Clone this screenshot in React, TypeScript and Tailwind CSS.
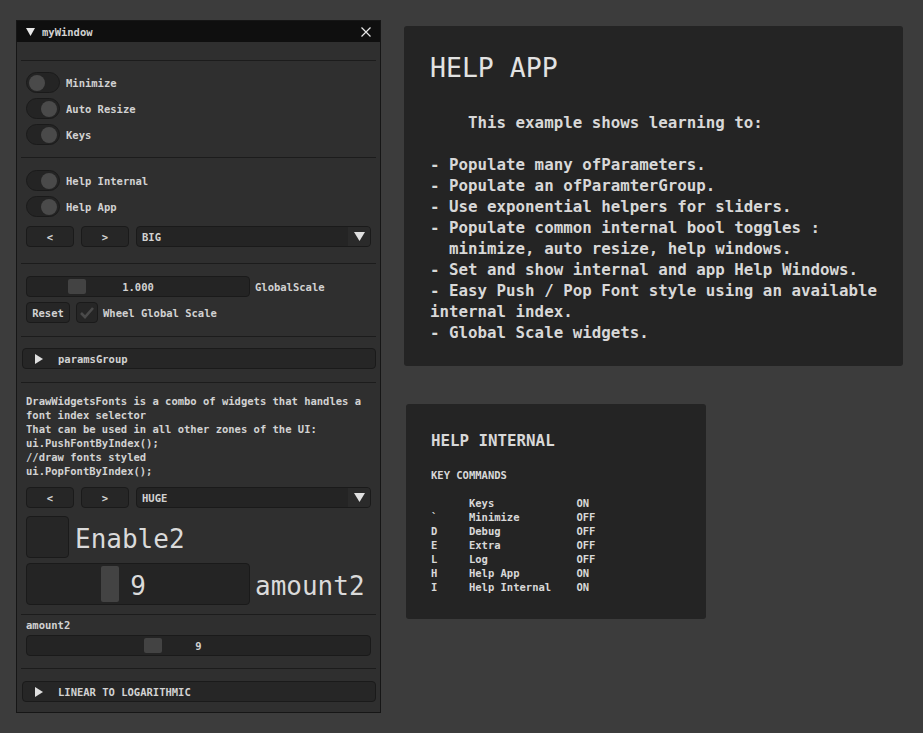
import React from 'react';

const mono = { fontFamily: '"DejaVu Sans Mono", "Liberation Mono", monospace' };

function Separator({ mt }: { mt: string }) {
  return <div className={`${mt} -mx-[5px] h-px bg-[#1c1c1c]`} />;
}

function Toggle({ on, label, mt }: { on: boolean; label: string; mt: string }) {
  return (
    <div className={`${mt} flex h-[21px] items-center`}>
      <div
        className={`flex h-[21px] w-[34px] items-center rounded-full border border-[#1a1a1a] bg-[#242424] px-[2px] ${
          on ? 'justify-end' : 'justify-start'
        }`}
      >
        <div className="h-[16px] w-[16px] rounded-full bg-[#4a4a4a]" />
      </div>
      <span className="ml-[6px]">{label}</span>
    </div>
  );
}

function Stepper({ value, mt }: { value: string; mt: string }) {
  return (
    <div className={`${mt} flex h-[21px] items-stretch gap-[7px]`}>
      <div className="flex w-[48px] items-center justify-center rounded-[4px] border border-[#1a1a1a] bg-[#262626]">&lt;</div>
      <div className="flex w-[48px] items-center justify-center rounded-[4px] border border-[#1a1a1a] bg-[#262626]">&gt;</div>
      <div className="flex flex-1 overflow-hidden rounded-[4px] border border-[#1a1a1a] bg-[#242424]">
        <span className="flex flex-1 items-center pl-[5px]">{value}</span>
        <span className="flex w-[22px] items-center justify-center bg-[#2a2a2a]">
          <svg width="11" height="9" viewBox="0 0 11 9">
            <path d="M0 0 H11 L5.5 9 Z" fill="#e0e0e0" />
          </svg>
        </span>
      </div>
    </div>
  );
}

function Header({ label, mt }: { label: string; mt: string }) {
  return (
    <div className={`${mt} -ml-[4px] -mr-[5px] flex h-[21px] items-center rounded-[4px] border border-[#1a1a1a] bg-[#262626]`}>
      <svg className="ml-[12px]" width="8" height="10" viewBox="0 0 8 10">
        <path d="M0 0 L8 5 L0 10 Z" fill="#e0e0e0" />
      </svg>
      <span className="ml-[15px]">{label}</span>
    </div>
  );
}

function MyWindow() {
  return (
    <div className="absolute left-[16px] top-[20px] flex h-[693px] w-[365px] flex-col border border-[#161616] bg-[#2f2f2f] text-[10.5px] font-bold leading-[14px] text-[#d2d2d2]">
      <div className="flex h-[21px] items-center bg-[#0f0f0f]">
        <svg className="ml-[9px]" width="9" height="8" viewBox="0 0 9 8">
          <path d="M0 0 H9 L4.5 8 Z" fill="#e8e8e8" />
        </svg>
        <span className="ml-[7px] flex-1">myWindow</span>
        <svg className="mr-[9px]" width="10" height="10" viewBox="0 0 10 10">
          <path d="M0.5 0.5 L9.5 9.5 M9.5 0.5 L0.5 9.5" stroke="#e8e8e8" strokeWidth="1.2" />
        </svg>
      </div>

      <div className="flex flex-col px-[9px]">
        <Separator mt="mt-[18px]" />
        <Toggle on={false} label="Minimize" mt="mt-[11px]" />
        <Toggle on label="Auto Resize" mt="mt-[5px]" />
        <Toggle on label="Keys" mt="mt-[5px]" />
        <Separator mt="mt-[12px]" />
        <Toggle on label="Help Internal" mt="mt-[12px]" />
        <Toggle on label="Help App" mt="mt-[5px]" />
        <Stepper value="BIG" mt="mt-[9px]" />
        <Separator mt="mt-[16px]" />

        <div className="mt-[12px] flex h-[21px] items-center">
          <div className="relative flex h-[21px] w-[224px] items-center justify-center rounded-[4px] border border-[#1a1a1a] bg-[#242424]">
            <div className="absolute left-[41px] top-[2px] h-[15px] w-[18px] rounded-[2px] bg-[#434343]" />
            <span className="relative">1.000</span>
          </div>
          <span className="ml-[5px]">GlobalScale</span>
        </div>

        <div className="mt-[5px] flex h-[21px] items-center">
          <div className="flex h-[21px] w-[44px] items-center justify-center rounded-[4px] border border-[#1a1a1a] bg-[#262626]">Reset</div>
          <div className="ml-[6px] flex h-[21px] w-[22px] items-center justify-center rounded-[4px] border border-[#1a1a1a] bg-[#262626]">
            <svg width="16" height="14" viewBox="0 0 16 14">
              <path d="M2 7 L6 11 L14 2" fill="none" stroke="#4a4a4a" strokeWidth="2.6" />
            </svg>
          </div>
          <span className="ml-[5px]">Wheel Global Scale</span>
        </div>

        <Separator mt="mt-[13px]" />
        <Header label="paramsGroup" mt="mt-[11px]" />
        <Separator mt="mt-[13px]" />

        <div className="mt-[11px] whitespace-pre leading-[14px]">
          {'DrawWidgetsFonts is a combo of widgets that handles a\nfont index selector\nThat can be used in all other zones of the UI:\nui.PushFontByIndex();\n//draw fonts styled\nui.PopFontByIndex();'}
        </div>

        <Stepper value="HUGE" mt="mt-[9px]" />

        <div className="mt-[8px] flex h-[42px] items-center">
          <div className="h-[42px] w-[43px] rounded-[4px] border border-[#1a1a1a] bg-[#262626]" />
          <span className="ml-[6px] mt-[4px] text-[26px] font-normal leading-[30px] text-[#dadada]">Enable2</span>
        </div>

        <div className="mt-[5px] flex h-[42px] items-center">
          <div className="relative flex h-[42px] w-[224px] items-center justify-center rounded-[4px] border border-[#1a1a1a] bg-[#242424]">
            <div className="absolute left-[74px] top-[2px] h-[36px] w-[18px] rounded-[2px] bg-[#434343]" />
            <span className="relative mt-[4px] text-[26px] font-normal leading-[30px] text-[#dadada]">9</span>
          </div>
          <span className="ml-[5px] mt-[4px] text-[26px] font-normal leading-[30px] text-[#dadada]">amount2</span>
        </div>

        <Separator mt="mt-[9px]" />
        <div className="mt-[3px] h-[14px]">amount2</div>
        <div className="relative mt-[3px] flex h-[21px] items-center justify-center rounded-[4px] border border-[#1a1a1a] bg-[#242424]">
          <div className="absolute left-[117px] top-[2px] h-[15px] w-[18px] rounded-[2px] bg-[#434343]" />
          <span className="relative">9</span>
        </div>
        <Separator mt="mt-[12px]" />
        <Header label="LINEAR TO LOGARITHMIC" mt="mt-[12px]" />
      </div>
    </div>
  );
}

function HelpApp() {
  const text = [
    '    This example shows learning to:',
    '',
    '- Populate many ofParameters.',
    '- Populate an ofParamterGroup.',
    '- Use exponential helpers for sliders.',
    '- Populate common internal bool toggles :',
    '  minimize, auto resize, help windows.',
    '- Set and show internal and app Help Windows.',
    '- Easy Push / Pop Font style using an available',
    'internal index.',
    '- Global Scale widgets.',
  ].join('\n');
  return (
    <div className="absolute left-[404px] top-[26px] h-[340px] w-[499px] rounded-[3px] bg-[#242424] pl-[26px] pt-[26px] font-bold text-[#d8d8d8]">
      <div className="text-[26.5px] font-normal leading-[32px] text-[#e2e2e2]">HELP APP</div>
      <div className="mt-[28px] whitespace-pre text-[15.8px] leading-[21px]">{text}</div>
    </div>
  );
}

function HelpInternal() {
  const rows = [
    '      Keys             ON',
    '`     Minimize         OFF',
    'D     Debug            OFF',
    'E     Extra            OFF',
    'L     Log              OFF',
    'H     Help App         ON',
    'I     Help Internal    ON',
  ].join('\n');
  return (
    <div className="absolute left-[406px] top-[404px] h-[215px] w-[300px] rounded-[3px] bg-[#242424] pl-[25px] pt-[27px] font-bold text-[#d8d8d8]">
      <div className="text-[15.8px] leading-[20px]">HELP INTERNAL</div>
      <div className="mt-[17px] text-[10.5px] leading-[14px]">KEY COMMANDS</div>
      <div className="mt-[14px] whitespace-pre text-[10.5px] leading-[14px]">{rows}</div>
    </div>
  );
}

export default function App() {
  return (
    <div className="relative h-[733px] w-[923px] overflow-hidden bg-[#3c3c3c]" style={mono}>
      <MyWindow />
      <HelpApp />
      <HelpInternal />
    </div>
  );
}
